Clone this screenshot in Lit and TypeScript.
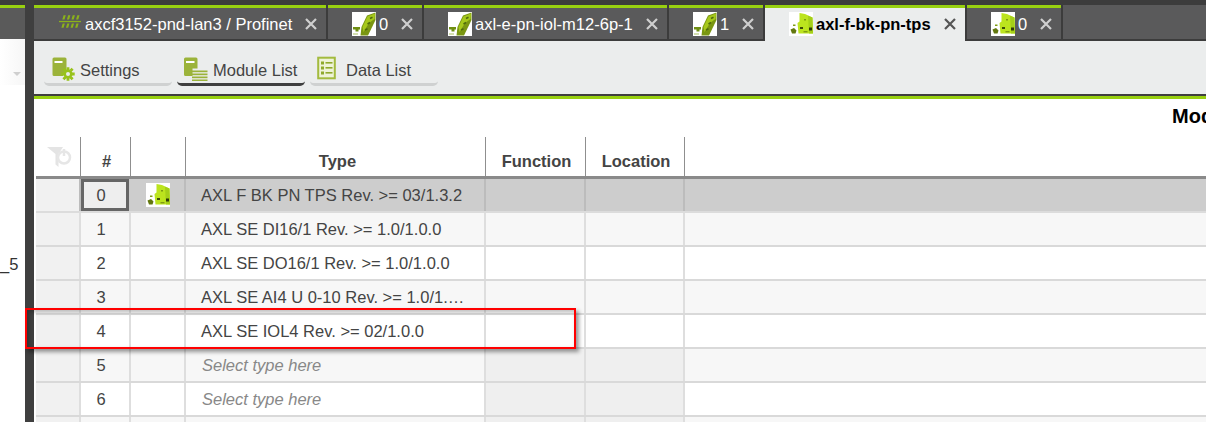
import { LitElement, html, css, svg } from "lit";
import { customElement } from "lit/decorators.js";

const slimIcon = html`<svg class="dev" viewBox="0 0 24 24"><rect width="24" height="24" fill="#fff"/>
<path d="M1 15h7v2.600H6.500v2H3.500v-2H1z" fill="#6f8f12"/><path d="M1 22h5" stroke="#a9c060" stroke-width="1"/>
<path d="M8.500 23.500 9.500 15 15 3.500 23.500 0.500V8L16 23.500z" fill="#7a9612"/>
<path d="M15.500 4.500 23 1.500 22.500 7 17 11 11.500 20 10.500 15z" fill="#a6c81c"/>
<path d="M18 6.500l2.500-1.200M15.500 12l2.500-1.500M13 18l2.500-1.200" stroke="#4f6a0c" stroke-width="1.600"/></svg>`;

const bkIcon = html`<svg class="dev" viewBox="0 0 24 24"><rect width="24" height="24" fill="#fff"/>
<path d="M10.500 1 16 2 23.500 5.500 24 21.500 9.500 21.500 8.500 11 10.500 9.500z" fill="#bce41e"/>
<path d="M19 3.800 23.500 5.500 24 21.500 20 21.500z" fill="#a4cf18"/>
<path d="M1.500 17.500 5 16 7.500 18.500 6.500 21.500 3 21.500z" fill="#63780f"/>
<path d="M4 12.500h2.500v1.500H4z" fill="#7f9c12"/>
<rect x="11" y="15" width="3" height="2" fill="#3e4d0a"/><rect x="20" y="15.500" width="3" height="3" fill="#2f3b08"/>
<rect x="15" y="7" width="2" height="1.500" fill="#7f9c12"/><rect x="14.500" y="19" width="4" height="1.400" fill="#7f9c12"/></svg>`;

const body = svg`<path d="M1.500 2.500A1.500 1.500 0 0 1 3 1h11a1.500 1.500 0 0 1 1.500 1.500V15L12 17v2.500H3A1.500 1.500 0 0 1 1.500 18z" fill="#9bb33a"/><rect x="3.500" y="4.500" width="8" height="2" fill="#fff"/>`;

const settingsIcon = html`<svg class="tool" viewBox="0 0 24 24">${body}
<g fill="#98c21c"><circle cx="17" cy="17.500" r="4.600"/><path d="M15.600 10.800h2.800v3h-2.800zM15.600 21.200h2.800v3h-2.800zM10.300 16.100h3v2.800h-3zM20.700 16.100h3v2.800h-3zM11.400 13.200l2-2 2 2-2 2zM18.600 13.200l2-2 2 2-2 2zM11.400 21.800l2 2 2-2-2-2zM18.600 21.800l2 2 2-2-2-2z"/></g><circle cx="17" cy="17.500" r="2" fill="#ebeded"/></svg>`;

const moduleIcon = html`<svg class="tool" viewBox="0 0 24 24">
<path d="M0 2.500A1.500 1.500 0 0 1 1.500 1h10.500A1.500 1.500 0 0 1 13.500 2.500V12H8.500v7.500H1.500A1.500 1.500 0 0 1 0 18z" fill="#9bb33a"/><rect x="2" y="4.500" width="8.500" height="2" fill="#fff"/>
<g fill="#9bb33a"><rect x="8" y="14" width="15.500" height="1.700"/><rect x="8" y="17" width="15.500" height="1.700"/><rect x="8" y="20" width="15.500" height="1.700"/><rect x="8" y="23" width="15.500" height="1.700"/></g></svg>`;

const dataIcon = html`<svg class="tool" viewBox="0 0 24 24"><rect x="1.200" y="1.200" width="16.600" height="20.600" fill="#eef3d8" stroke="#a3bb3f" stroke-width="2"/>
<g fill="#8fa92c"><rect x="4" y="5" width="3" height="3"/><rect x="4" y="10" width="3" height="3"/><rect x="4" y="15" width="3" height="3"/><rect x="8.500" y="5.500" width="7" height="1.600"/><rect x="8.500" y="10.500" width="7" height="1.600"/><rect x="8.500" y="15.500" width="7" height="1.600"/></g></svg>`;

const filterIcon = html`<svg class="filter" viewBox="0 0 26 24"><path d="M0 2h16l-4.500 7v13l-3-2.500V9z" fill="#e4e4e4"/>
<circle cx="17" cy="12.500" r="6" fill="#fff" stroke="#e6e6e6" stroke-width="2.500"/><path d="M17 4v7" stroke="#e6e6e6" stroke-width="2.500"/></svg>`;

const terminal = html`<svg class="dev net" viewBox="0 0 24 24"><g fill="#8bb21a">
<path d="M5 2.500h2.400L6 7H3.600zM10 2.500h2.400L11 7H8.600zM15 2.500h2.400L16 7h-2.400zM20 2.500h2.400L21 7h-2.400zM4 11.500h2.400L5 16H2.600zM9 11.500h2.400L10 16H7.600zM14 11.500h2.400L15 16h-2.400zM19 11.500h2.400L20 16h-2.400z"/><rect x="0" y="8.600" width="24" height="1.400"/></g></svg>`;

interface Tab { icon: unknown; label: string; width: number; active?: boolean }
const tabs: Tab[] = [
  { icon: terminal, label: "axcf3152-pnd-lan3 / Profinet", width: 292 },
  { icon: slimIcon, label: "0", width: 94 },
  { icon: slimIcon, label: "axl-e-pn-iol-m12-6p-1", width: 243 },
  { icon: slimIcon, label: "1", width: 94 },
  { icon: bkIcon, label: "axl-f-bk-pn-tps", width: 200, active: true },
  { icon: bkIcon, label: "0", width: 94 },
];

const rows = [
  { n: "0", type: "AXL F BK PN TPS Rev. >= 03/1.3.2", sel: true },
  { n: "1", type: "AXL SE DI16/1 Rev. >= 1.0/1.0.0" },
  { n: "2", type: "AXL SE DO16/1 Rev. >= 1.0/1.0.0" },
  { n: "3", type: "AXL SE AI4 U 0-10 Rev. >= 1.0/1.…" },
  { n: "4", type: "AXL SE IOL4 Rev. >= 02/1.0.0" },
  { n: "5", type: "", empty: true },
  { n: "6", type: "", empty: true },
  { n: "", type: "", blank: true },
] as { n: string; type: string; sel?: boolean; empty?: boolean; blank?: boolean }[];

@customElement("app-root")
export class AppRoot extends LitElement {
  static styles = css`
    :host { display: flex; width: 1206px; height: 422px; overflow: hidden; position: relative; background: #fff; font-family: "Liberation Sans", Arial, sans-serif; font-size: 16.500px; color: #444; }
    .side { width: 25px; flex: none; display: flex; flex-direction: column; }
    .side-top { border-top: 5px solid #3c3c3c; background: #5a5a5a; box-shadow: inset 0 3px 0 #98d010; box-sizing: content-box; height: 34px; }
    .drop { height: 46px; background: linear-gradient(90deg, #fff, #f6f6f6); display: flex; justify-content: flex-end; padding: 33px 4px 0 0; box-sizing: border-box; }
    .caret { width: 0; height: 0; border: 4px solid transparent; border-top: 4px solid #cfcfcf; }
    .five { margin-top: 170px; color: #333; white-space: nowrap; line-height: 18px; }
    .rule { width: 9px; flex: none; background: #3f3f3f; }
    .main { flex: 1; min-width: 0; display: flex; flex-direction: column; }
    .tabs { display: flex; height: 41px; box-sizing: border-box; background: #3c3c3c; padding-top: 5px; flex: none; }
    .tab { display: flex; align-items: center; height: 34px; box-sizing: border-box; border-top: 3px solid #98d010; background: #5a5a5b; color: #fff; padding: 1px 9px 0 24px; margin-right: 2px; flex: none; white-space: nowrap; }
    .tab.active { height: 36px; background: #ebeded; color: #000; font-weight: bold; padding-bottom: 2px; }
    .tab .label { margin-left: 3px; }
    .x { margin-left: auto; width: 12px; height: 12px; flex: none; }
    .x path { stroke: #cfcfcf; stroke-width: 2.200; }
    .tab.active .x path { stroke: #555; }
    .tab-rest { flex: 1; height: 34px; background: #5a5a5b; }
    .dev { width: 24px; height: 24px; flex: none; display: block; }
    .dev.net { width: 22px; height: 24px; margin-left: 1px; margin-right: 1px; }
    .toolbar { height: 53px; flex: none; box-sizing: border-box; background: #ebeded; display: flex; gap: 5px; padding: 15px 0 0 10px; align-items: flex-start; }
    .btn { width: 128px; height: 30px; box-sizing: border-box; padding: 1px 0 0 7px; display: flex; align-items: center; gap: 5px; color: #444; border-bottom: 3px solid #cfd1d1; border-radius: 0 0 5px 5px; white-space: nowrap; }
    .btn.on { border-bottom-color: #3f3f3f; }
    .tool { width: 24px; height: 25px; flex: none; margin-top: -4px; }
    .accent { height: 5px; flex: none; background: #98d010; border-top: 2px solid #3f3f3f; box-sizing: border-box; }
    .title { height: 38px; flex: none; box-sizing: border-box; padding: 6px 0 0 1138px; font-size: 20px; font-weight: bold; color: #000; white-space: nowrap; line-height: 23px; overflow: hidden; }
    .table { margin-left: 2px; }
    .r { display: grid; grid-template-columns: 45px 50px 55px 300px 100px 99px 1fr; }
    .head { height: 42px; box-sizing: border-box; border-bottom: 3px solid #8a8a8a; }
    .head > div { border-right: 1px solid #8f8f8f; text-align: center; font-weight: bold; color: #444; padding: 15px 0 0 2px; line-height: 18px; box-sizing: border-box; }
    .head > div:first-child { padding: 8px 0 0 11px; text-align: left; }
    .head > div:last-child { border-right: 0; }
    .head > .wide { padding-left: 4px; }
    .filter { width: 26px; height: 24px; display: block; }
    .row { height: 34px; background: #f7f7f7; border-bottom: 2px solid #d9d9d9; box-sizing: border-box; }
    .row.even { background: #fff; }
    .row.sel { background: #cdcdcd; border-bottom-color: #dcdcdc; }
    .row > div { border-right: 2px solid #dedede; display: flex; align-items: center; box-sizing: border-box; line-height: 18px; min-width: 0; white-space: nowrap; }
    .row.sel > div { border-right-color: #bcbcbc; }
    .row > div:last-child { border-right: 0; }
    .row .lead { background: #f1f1f1; }
    .row .num { justify-content: center; padding-right: 8px; }
    .row.sel .num.cur { background: #eeeeee; border: 3px solid #666; margin-right: 2px; padding-right: 8px; }
    .row .ico { justify-content: center; padding-left: 1px; }
    .row .type { padding-left: 15px; color: #444; }
    .hint { font-style: italic; color: #888; padding-left: 1px; }
    .row .off { background: #efefef; }
    .mark { position: absolute; left: 25px; top: 308px; width: 551px; height: 41px; box-sizing: border-box; border: 2px solid #f00; box-shadow: 3px 3px 4px rgba(0,0,0,.4), inset 2px 2px 4px rgba(0,0,0,.25); pointer-events: none; }
  `;

  private close() {
    return html`<svg class="x" viewBox="0 0 12 12"><path d="M1 1l10 10M11 1 1 11"/></svg>`;
  }

  render() {
    return html`
      <div class="side">
        <div class="side-top"></div>
        <div class="drop"><span class="caret"></span></div>
        <div class="five">_5</div>
      </div>
      <div class="rule"></div>
      <div class="main">
        <div class="tabs">
          ${tabs.map((t) => html`
            <div class="tab ${t.active ? "active" : ""}" style="width:${t.width}px">
              ${t.icon}<span class="label">${t.label}</span>${this.close()}
            </div>`)}
          <div class="tab-rest"></div>
        </div>
        <div class="toolbar">
          <div class="btn">${settingsIcon}Settings</div>
          <div class="btn on">${moduleIcon}Module List</div>
          <div class="btn">${dataIcon}Data List</div>
        </div>
        <div class="accent"></div>
        <div class="title">Module List</div>
        <div class="table">
          <div class="r head">
            <div>${filterIcon}</div><div>#</div><div></div><div class="wide">Type</div><div>Function</div><div>Location</div><div></div>
          </div>
          ${rows.map((r, i) => html`
            <div class="r row ${i % 2 === 0 && i > 0 ? "even" : ""} ${r.sel ? "sel" : ""}">
              <div class="lead"></div>
              <div class="num ${r.sel ? "cur" : ""}">${r.n}</div>
              <div class="ico">${r.sel ? bkIcon : ""}</div>
              <div class="type">${r.empty ? html`<span class="hint">Select type here</span>` : r.type}</div>
              <div class="${r.empty || r.blank ? "off" : ""}"></div>
              <div class="${r.empty || r.blank ? "off" : ""}"></div>
              <div></div>
            </div>`)}
        </div>
      </div>
      <div class="mark"></div>
    `;
  }
}
